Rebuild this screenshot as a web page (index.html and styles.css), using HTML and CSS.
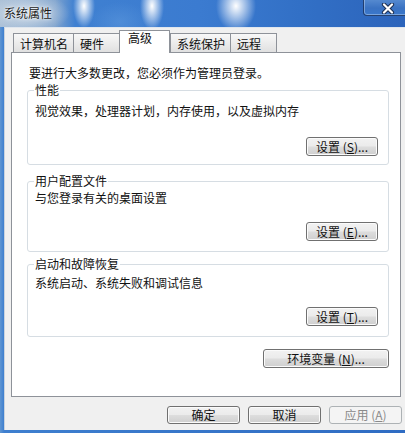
FILE: index.html
```html
<!DOCTYPE html>
<html lang="zh-CN">
<head>
<meta charset="utf-8">
<title>系统属性</title>
<link rel="stylesheet" href="styles.css">
</head>
<body>
<div class="window">
  <div class="titlebar">
    <span class="title">系统属性</span>
    <div class="close">
      <svg width="14" height="11" viewBox="0 0 14 11">
        <path d="M3 1.5 L11 9.5 M11 1.5 L3 9.5" stroke="#1c2f52" stroke-width="4.2" stroke-linecap="round"/>
        <path d="M3 1.5 L11 9.5 M11 1.5 L3 9.5" stroke="#ffffff" stroke-width="2.2" stroke-linecap="round"/>
      </svg>
    </div>
  </div>
  <div class="frame">
    <div class="body">
      <div class="tabs">
        <div class="tab">计算机名</div>
        <div class="tab">硬件</div>
        <div class="tab active">高级</div>
        <div class="tab">系统保护</div>
        <div class="tab">远程</div>
      </div>
      <div class="panel">
        <div class="intro">要进行大多数更改，您必须作为管理员登录。</div>
        <div class="group group-perf">
          <div class="group-title">性能</div>
          <div class="group-text">视觉效果，处理器计划，内存使用，以及虚拟内存</div>
          <div class="group-actions"><button class="btn btn-set">设置 (<u>S</u>)...</button></div>
        </div>
        <div class="group group-profile">
          <div class="group-title">用户配置文件</div>
          <div class="group-text">与您登录有关的桌面设置</div>
          <div class="group-actions"><button class="btn btn-set">设置 (<u>E</u>)...</button></div>
        </div>
        <div class="group group-startup">
          <div class="group-title">启动和故障恢复</div>
          <div class="group-text">系统启动、系统失败和调试信息</div>
          <div class="group-actions"><button class="btn btn-set">设置 (<u>T</u>)...</button></div>
        </div>
        <div class="env-row"><button class="btn btn-env">环境变量 (<u>N</u>)...</button></div>
      </div>
      <div class="actions">
        <button class="btn btn-main">确定</button>
        <button class="btn btn-main">取消</button>
        <button class="btn btn-main" disabled>应用 (<u>A</u>)</button>
      </div>
    </div>
  </div>
</div>
</body>
</html>
```
FILE: styles.css
```css
* { box-sizing: border-box; }
html, body { margin: 0; padding: 0; }
body {
  width: 405px;
  height: 433px;
  overflow: hidden;
  font-family: "Noto Sans CJK SC", "Noto Sans", sans-serif;
  font-size: 12px;
  line-height: 14px;
  color: #111;
}
.window {
  width: 405px;
  height: 433px;
  display: flex;
  flex-direction: column;
  overflow: hidden;
  background: linear-gradient(90deg, #5f95d2 0, #3e7fcf 4px, #2f6cc3 100%);
}
.titlebar {
  height: 27px;
  flex: none;
  display: flex;
  align-items: flex-start;
  overflow: hidden;
  background:
    radial-gradient(ellipse 42px 20px at 28px 13px, rgba(214,224,234,0.95), rgba(214,224,234,0) 100%),
    radial-gradient(ellipse 11px 22px at 84px 6px, rgba(255,255,255,1), rgba(255,255,255,0) 100%),
    radial-gradient(ellipse 12px 24px at 152px 6px, rgba(255,255,255,1), rgba(255,255,255,0) 100%),
    radial-gradient(ellipse 20px 26px at 236px 6px, rgba(255,255,255,1), rgba(255,255,255,0) 100%),
    radial-gradient(ellipse 30px 20px at 120px 22px, rgba(90,150,220,0.6), rgba(90,150,220,0) 100%),
    linear-gradient(90deg, #a9bfd6 0, #7fa3cd 55px, #3f80d1 75px, #3b7bd0 200px, #3270c6 300px, #2c64bb 405px);
}
.title {
  padding: 6px 0 0 4px;
  font-size: 12px;
  line-height: 14px;
  color: #1b1b1b;
  text-shadow: 0 0 4px rgba(255,255,255,0.9), 0 0 2px rgba(255,255,255,0.9);
}
.close {
  margin-left: auto;
  margin-right: -8px;
  margin-top: -3px;
  width: 50px;
  height: 19px;
  border: 1px solid rgba(20,40,80,0.75);
  border-radius: 0 0 4px 4px;
  box-shadow: inset 0 0 0 1px rgba(200,220,245,0.45);
  background: linear-gradient(#5b8fd3, #3a72c2 60%, #3a78cc);
  display: flex;
  align-items: center;
  justify-content: flex-start;
  padding: 3px 0 0 17px;
}
.close svg { display: block; }
.frame {
  flex: 1;
  display: flex;
  flex-direction: column;
  padding: 0 0 3px 4px;
}
.body {
  flex: 1;
  background: #f0f0f0;
  border-top: 1px solid #dfe6ee;
  border-left: 1px solid #c9d3de;
  padding: 2px 4px 0 6px;
  display: flex;
  flex-direction: column;
}
.tabs {
  display: flex;
  align-items: flex-end;
  height: 22px;
  padding-left: 2px;
  position: relative;
  z-index: 1;
}
.tab {
  min-width: 46px;
  height: 19px;
  padding: 3px 5px 0 6px;
  border: 1px solid #8e9299;
  border-bottom: none;
  border-right: none;
  background: linear-gradient(#f8f8f8, #ececec 50%, #e0e0e0);
  white-space: nowrap;
  color: #111;
}
.tab:nth-child(4), .tab:last-child { border-right: 1px solid #8e9299; }
.tab:last-child { border-left: none; }
.tab.active {
  min-width: 51px;
  height: 23px;
  margin-bottom: -1px;
  padding: 0 5px 0 8px;
  background: #fff;
  border-right: 1px solid #8e9299;
  border-radius: 1px 1px 0 0;
}
.panel {
  height: 345px;
  background: #fff;
  border: 1px solid #8e9299;
  display: flex;
  flex-direction: column;
  padding: 13px 11px 0 15px;
}
.intro { padding-left: 2px; }
.group {
  border: 1px solid #d6dde3;
  border-radius: 3px;
  padding: 0 10px 9px 7px;
}
.group-title {
  width: fit-content;
  margin: -8px 0 0 -1px;
  padding: 0 1px;
  background: #fff;
}
.group-actions {
  display: flex;
  justify-content: flex-end;
}
.group-perf { margin-top: 10px; padding-bottom: 8px; }
.group-perf .group-text { margin-top: 7px; }
.group-perf .group-actions { margin-top: 19px; }
.group-profile { margin-top: 16px; padding-bottom: 10px; }
.group-profile .group-text { margin-top: 3px; }
.group-profile .group-actions { margin-top: 17px; }
.group-startup { margin-top: 12px; padding-bottom: 10px; }
.group-startup .group-text { margin-top: 5px; }
.group-startup .group-actions { margin-top: 17px; }
.env-row {
  display: flex;
  justify-content: flex-end;
  margin-top: 12px;
}
.btn {
  font-family: inherit;
  font-size: 12px;
  line-height: 14px;
  color: #111;
  height: 19px;
  padding: 0;
  border: 1px solid #707070;
  border-radius: 3px;
  background: linear-gradient(#f2f2f2, #ebebeb 48%, #dddddd 52%, #cfcfcf);
  box-shadow: inset 0 0 0 1px #fbfbfb;
  white-space: nowrap;
}
.btn u { text-decoration: underline; text-underline-offset: 1px; }
.btn-set { width: 72px; }
.btn-env { width: 126px; }
.actions {
  display: flex;
  justify-content: flex-end;
  gap: 8px;
  margin: 9px -1px 0 0;
}
.btn-main { width: 73px; height: 18px; }
.btn-main:disabled {
  color: #8a8a8a;
  border-color: #adb2b5;
  background: #f4f4f4;
  box-shadow: none;
}
```
